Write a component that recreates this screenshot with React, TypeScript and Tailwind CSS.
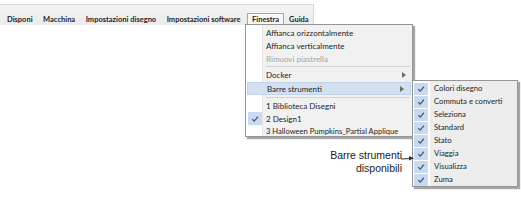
import React from 'react';

const font = { fontFamily: 'Lato, "Open Sans", sans-serif' };

const Check = ({ className = '' }: { className?: string }) => (
  <svg viewBox="0 0 10 10" className={className} width="8" height="8">
    <path d="M1.5 5.2 L4 7.6 L8.6 2.2" fill="none" stroke="#4a5877" strokeWidth="1.6" />
  </svg>
);

const Arrow = () => (
  <svg width="4" height="6" viewBox="0 0 4 6" className="ml-auto mr-[6px]">
    <path d="M0 0 L4 3 L0 6 Z" fill="#6b6b6b" />
  </svg>
);

const barItems = ['Disponi', 'Macchina', 'Impostazioni disegno', 'Impostazioni software'];

const submenuItems = [
  'Colori disegno',
  'Commuta e converti',
  'Seleziona',
  'Standard',
  'Stato',
  'Viaggia',
  'Visualizza',
  'Zuma',
];

const App = () => {
  return (
    <div className="relative w-[521px] h-[202px] bg-white overflow-hidden text-[#1e1e1e] whitespace-nowrap" style={font}>
      {/* menu bar */}
      <div className="pt-[4px]">
        <div className="w-[314px] h-[21px] border-t border-r border-[#d6d6d6] bg-gradient-to-b from-[#f4f4f4] to-[#ebebeb] flex items-end pl-[3px] text-[7.5px] font-bold">
          {barItems.map((item) => (
            <div key={item} className="h-[11px] px-[4px] mr-[2.5px] flex items-center leading-none">
              {item}
            </div>
          ))}
          <div className="h-[12px] px-[4px] flex items-center leading-none border border-b-0 border-[#a7a7a7] bg-[#f7f7f7]">
            Finestra
          </div>
          <div className="h-[11px] px-[5px] flex items-center leading-none">Guida</div>
        </div>
      </div>

      {/* Finestra dropdown */}
      <div className="absolute left-[245px] top-[24px] w-[168px] h-[113px] border border-[#959595] bg-[#f1f1f1] shadow-[2px_2px_1px_rgba(0,0,0,0.35)] text-[8px]">
        <div className="absolute left-0 top-0 bottom-0 w-[17px] bg-white border-r border-[#e6e6e6]" />
        <div className="relative pt-[1px]">
          <div className="h-[13px] flex items-center pl-[20px]">Affianca orizzontalmente</div>
          <div className="h-[13px] flex items-center pl-[20px]">Affianca verticalmente</div>
          <div className="h-[13px] flex items-center pl-[20px] text-[#a3a3a3]">Rimuovi piastrella</div>
          <div className="h-[3px] flex items-center pl-[20px] pr-[2px]">
            <div className="h-px w-full bg-[#d3d3d3]" />
          </div>
          <div className="h-[14px] flex items-center pl-[20px]">
            Docker
            <Arrow />
          </div>
          <div className="h-[13px] mx-[1px] flex items-center pl-[19px] bg-[#d3e0f1] border border-[#c3d3ec]">
            Barre strumenti
            <Arrow />
          </div>
          <div className="h-[4px] flex items-center pl-[20px] pr-[2px]">
            <div className="h-px w-full bg-[#d3d3d3]" />
          </div>
          <div className="h-[13px] flex items-center pl-[20px]">1 Biblioteca Disegni</div>
          <div className="h-[13px] flex items-center">
            <div className="w-[14px] h-[13px] ml-[2px] mr-[4px] bg-[#c8d9f0] flex items-center justify-center">
              <Check />
            </div>
            2 Design1
          </div>
          <div className="h-[13px] flex items-center pl-[20px] text-[7.6px]">3 Halloween Pumpkins_Partial Applique</div>
        </div>
      </div>

      {/* Barre strumenti submenu */}
      <div className="absolute left-[412px] top-[80px] w-[106px] h-[107px] border border-[#959595] bg-[#ededed] shadow-[2px_2px_1px_rgba(0,0,0,0.35)] text-[7.7px]">
        <div className="absolute left-0 top-0 bottom-0 w-[17px] bg-white" />
        <div className="relative pt-[1px]">
          {submenuItems.map((item) => (
            <div key={item} className="h-[13px] flex items-center">
              <div className="w-[14px] h-[12px] ml-[1px] mr-[6px] bg-[#c8d9f0] flex items-center justify-center">
                <Check />
              </div>
              {item}
            </div>
          ))}
        </div>
      </div>

      {/* annotation */}
      <div
        className="absolute right-[119px] top-[149px] text-right text-[10.5px] leading-[13px] text-[#1a1a1a]"
        style={{ fontFamily: '"Liberation Sans", Arial, sans-serif' }}
      >
        <div>Barre strumenti</div>
        <div>disponibili</div>
      </div>
      <svg className="absolute left-[401px] top-[154px]" width="14" height="8" viewBox="0 0 14 8">
        <path d="M0 5 L10 4.5" stroke="#333" strokeWidth="1" fill="none" />
        <path d="M8 2 L13 4.3 L8 6.6 Z" fill="#333" />
      </svg>
    </div>
  );
};

export default App;
